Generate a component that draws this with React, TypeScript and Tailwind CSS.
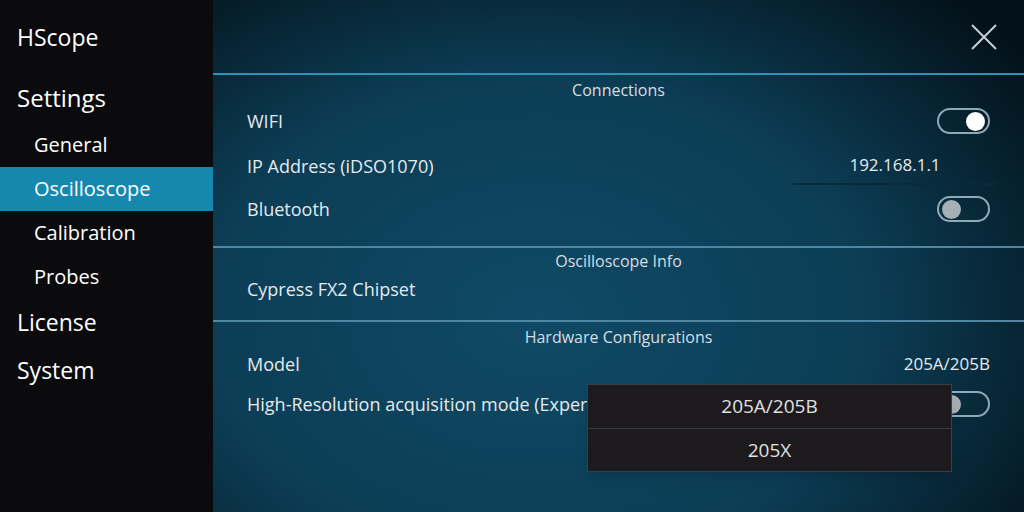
import React from "react";

function Toggle({ on }: { on: boolean }) {
  return (
    <div className="w-[53px] h-[26px] rounded-full border-2 border-[#8fa9b6] flex items-center px-[3px] box-border"
      style={{ justifyContent: on ? "flex-end" : "flex-start" }}>
      <div className={on ? "w-[19px] h-[19px] rounded-full bg-white" : "w-[19px] h-[19px] rounded-full bg-[#a6afb5]"} />
    </div>
  );
}

function SectionTitle({ children }: { children: React.ReactNode }) {
  return <div className="text-center text-[16px] text-[#d8dde0] leading-[20px]">{children}</div>;
}

export default function App() {
  const font = { fontFamily: '"Open Sans", "Noto Sans", sans-serif' };
  return (
    <div className="w-[1024px] h-[512px] flex overflow-hidden text-white" style={font}>
      <div className="w-[213px] h-full bg-[#0b0b0d] flex flex-col shrink-0">
        <div className="pl-[17px] pt-[21px] h-[78px] text-[23px] leading-[32px] font-medium">HScope</div>
        <div className="pl-[17px] h-[44px] text-[24px] leading-[40px] font-medium">Settings</div>
        <div className="pl-[34px] h-[45px] text-[20px] leading-[45px] font-medium">General</div>
        <div className="pl-[34px] h-[44px] text-[20px] leading-[44px] font-medium bg-[#1788ad]">Oscilloscope</div>
        <div className="pl-[34px] h-[44px] text-[20px] leading-[44px] font-medium">Calibration</div>
        <div className="pl-[34px] h-[44px] text-[20px] leading-[44px] font-medium">Probes</div>
        <div className="pl-[17px] h-[48px] text-[23px] leading-[46px] font-medium">License</div>
        <div className="pl-[17px] h-[48px] text-[23px] leading-[46px] font-medium">System</div>
      </div>
      <div className="relative flex-1 h-full flex flex-col bg-[radial-gradient(ellipse_75%_85%_at_40%_62%,#0f4a66_0%,#0c3d55_55%,#051b26_90%,#03121a_100%)]">
        <div className="h-[73px] flex justify-end items-start pt-[24px] pr-[27px] shrink-0">
          <svg width="26" height="26" viewBox="0 0 26 26">
            <path d="M1 1 L25 25 M25 1 L1 25" stroke="#c8d0d4" strokeWidth="2" />
          </svg>
        </div>
        <div className="h-[2px] bg-[#2b93b5] shrink-0" />
        <div className="pt-[5px]"><SectionTitle>Connections</SectionTitle></div>
        <div className="flex items-center justify-between pl-[34px] pr-[34px] h-[42px] text-[18px] text-[#e6eaec]">
          <span>WIFI</span>
          <Toggle on />
        </div>
        <div className="flex items-center justify-between pl-[34px] pr-[27px] h-[45px] pt-[4px] text-[18px] text-[#e6eaec]">
          <span>IP Address (iDSO1070)</span>
          <div className="w-[204px] h-[36px] border-b-2 border-[#0a2a3a] flex items-center justify-center text-[17px] pb-[2px]">192.168.1.1</div>
        </div>
        <div className="flex items-center justify-between pl-[34px] pr-[34px] h-[44px] text-[18px] text-[#e6eaec]">
          <span>Bluetooth</span>
          <Toggle on={false} />
        </div>
        <div className="h-[15px]" />
        <div className="h-[2px] bg-[#4f87a3] shrink-0" />
        <div className="pt-[3px]"><SectionTitle>Oscilloscope Info</SectionTitle></div>
        <div className="pl-[34px] h-[36px] flex items-center text-[18px] text-[#e6eaec]">Cypress FX2 Chipset</div>
        <div className="h-[13px]" />
        <div className="h-[2px] bg-[#4f87a3] shrink-0" />
        <div className="pt-[5px]"><SectionTitle>Hardware Configurations</SectionTitle></div>
        <div className="flex items-center justify-between pl-[34px] pr-[34px] h-[34px] text-[18px] text-[#e6eaec]">
          <span>Model</span>
          <span className="text-[17px]">205A/205B</span>
        </div>
        <div className="flex items-center justify-between pl-[34px] pr-[34px] h-[46px] text-[18px] text-[#e6eaec]">
          <span>High-Resolution acquisition mode (Experimental)</span>
          <Toggle on={false} />
        </div>
        <div className="absolute left-[374px] top-[384px] w-[365px] bg-[#1c1a1c] border border-[#3c3d40] shadow-lg text-[19px] text-[#e0e0e0]">
          <div className="h-[44px] flex items-center justify-center border-b border-[#3c3d40]">205A/205B</div>
          <div className="h-[42px] flex items-center justify-center">205X</div>
        </div>
      </div>
    </div>
  );
}
